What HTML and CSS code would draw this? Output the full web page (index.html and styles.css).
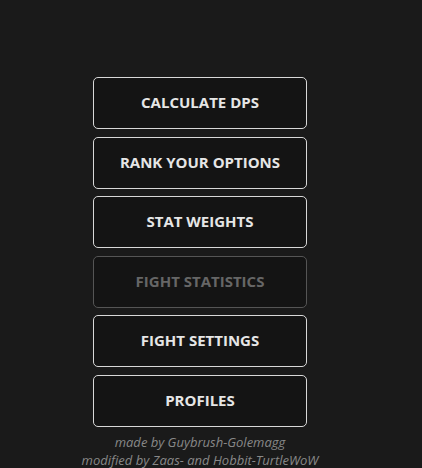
FILE: index.html
```html
<!DOCTYPE html>
<html>
<head>
<meta charset="utf-8">
<link rel="stylesheet" href="styles.css">
</head>
<body>
<div class="menu">
  <button class="btn">CALCULATE DPS</button>
  <button class="btn">RANK YOUR OPTIONS</button>
  <button class="btn">STAT WEIGHTS</button>
  <button class="btn disabled">FIGHT STATISTICS</button>
  <button class="btn">FIGHT SETTINGS</button>
  <button class="btn">PROFILES</button>
  <div class="credits">
    <div>made by Guybrush-Golemagg</div>
    <div>modified by Zaas- and Hobbit-TurtleWoW</div>
  </div>
</div>
</body>
</html>
```

FILE: styles.css
```css
html, body {
  margin: 0;
  padding: 0;
  background: #1a1a1a;
  height: 100%;
  overflow: hidden;
}
.menu {
  width: 214px;
  margin-left: 93px;
  padding-top: 77px;
  display: flex;
  flex-direction: column;
  gap: 7.5px;
  font-family: "Open Sans", sans-serif;
}
.btn {
  box-sizing: border-box;
  height: 52px;
  width: 214px;
  background: #141414;
  border: 1px solid #d8d8d8;
  border-radius: 5px;
  color: #e6e6e6;
  font-family: "Open Sans", sans-serif;
  font-weight: 700;
  font-size: 15px;
  padding: 0 0 2px 0;
}
.btn.disabled {
  border-color: #555;
  color: #666;
}
.credits {
  margin-top: -1px;
  text-align: center;
  font-style: italic;
  font-size: 13px;
  line-height: 18px;
  color: #888;
  white-space: nowrap;
  display: flex;
  flex-direction: column;
  align-items: center;
}
```
